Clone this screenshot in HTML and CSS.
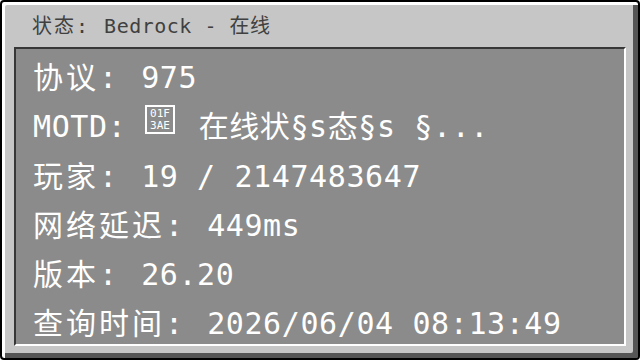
FILE: index.html
```html
<!DOCTYPE html>
<html lang="zh">
<head>
<meta charset="utf-8">
<title>状态</title>
<link rel="stylesheet" href="styles.css">
</head>
<body>
<div class="window">
  <div class="title"><span class="k">状态: </span>Bedrock - 在线</div>
  <div class="panel">
    <div class="row"><span class="k">协议: </span>975</div>
    <div class="row"><span class="m">MOTD: </span><span class="tofu"><span class="hex">01F</span><span class="hex">3AE</span></span> 在线状§s态§s §...</div>
    <div class="row"><span class="k">玩家: </span>19 / 2147483647</div>
    <div class="row"><span class="k">网络延迟: </span>449ms</div>
    <div class="row"><span class="k">版本: </span>26.20</div>
    <div class="row"><span class="k">查询时间: </span>2026/06/04 08:13:49</div>
  </div>
</div>
</body>
</html>
```

FILE: styles.css
```css
html, body {
  margin: 0;
  padding: 0;
  background: #ffffff;
}

.window {
  box-sizing: border-box;
  width: 640px;
  height: 360px;
  border: 2px solid #000000;
  border-radius: 4px;
  background: #c6c6c6;
  box-shadow: inset 3px 3px 0 #ffffff, inset -5px -5px 0 #555555;
  display: flex;
  flex-direction: column;
  font-family: "DejaVu Sans Mono", "Noto Sans CJK SC", monospace;
  overflow: hidden;
}

.title {
  box-sizing: border-box;
  height: 45px;
  padding: 3px 0 0 30px;
  line-height: 42px;
  font-size: 20px;
  letter-spacing: 0.5px;
  color: #404040;
  white-space: pre;
}

.title .k {
  letter-spacing: 2px;
}

.panel {
  box-sizing: border-box;
  height: 299px;
  margin: 0 12px;
  padding-top: 4px;
  border-style: solid;
  border-width: 2px;
  border-color: #373737 #ffffff #ffffff #373737;
  background: #8b8b8b;
  color: #ffffff;
  font-size: 30px;
  letter-spacing: 0.6px;
}

.row {
  height: 49.3px;
  line-height: 49.3px;
  padding-left: 17px;
  white-space: pre;
}

.row .k {
  letter-spacing: 3px;
}

.tofu {
  display: inline-block;
  box-sizing: border-box;
  width: 30px;
  height: 29px;
  padding-top: 1px;
  border: 2px solid #ffffff;
  vertical-align: 3px;
  overflow: hidden;
  font-size: 11px;
  line-height: 12px;
  letter-spacing: 0;
  text-align: center;
  margin-right: 5px;
}

.hex {
  display: block;
}
```
